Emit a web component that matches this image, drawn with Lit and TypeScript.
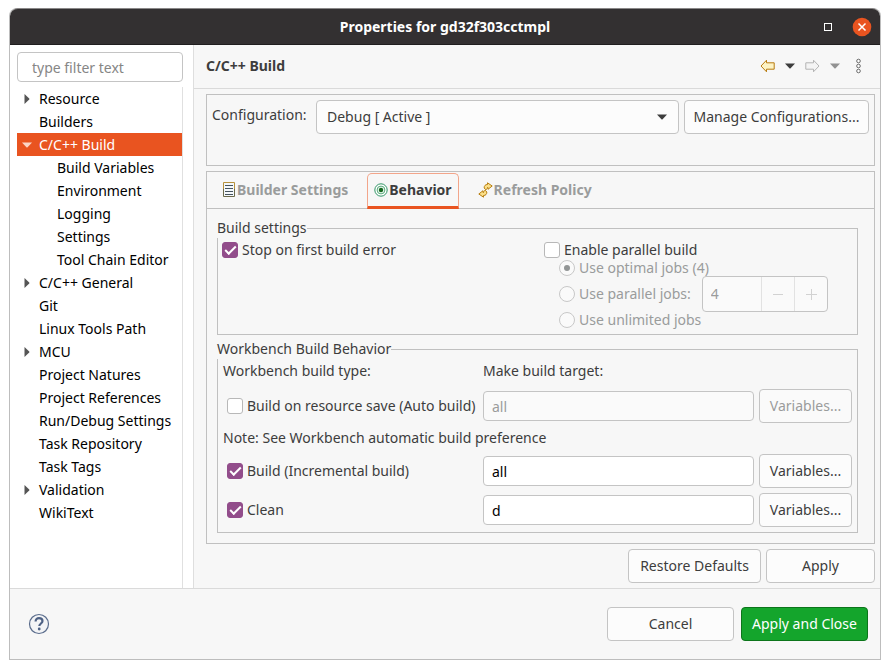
import { LitElement, html, css, svg, nothing } from "lit";
import { customElement, property, state } from "lit/decorators.js";
import { classMap } from "lit/directives/class-map.js";

type TreeNode = { label: string; level: number; arrow?: "closed" | "open" };

const TREE: TreeNode[] = [
  { label: "Resource", level: 1, arrow: "closed" },
  { label: "Builders", level: 1 },
  { label: "C/C++ Build", level: 1, arrow: "open" },
  { label: "Build Variables", level: 2 },
  { label: "Environment", level: 2 },
  { label: "Logging", level: 2 },
  { label: "Settings", level: 2 },
  { label: "Tool Chain Editor", level: 2 },
  { label: "C/C++ General", level: 1, arrow: "closed" },
  { label: "Git", level: 1 },
  { label: "Linux Tools Path", level: 1 },
  { label: "MCU", level: 1, arrow: "closed" },
  { label: "Project Natures", level: 1 },
  { label: "Project References", level: 1 },
  { label: "Run/Debug Settings", level: 1 },
  { label: "Task Repository", level: 1 },
  { label: "Task Tags", level: 1 },
  { label: "Validation", level: 1, arrow: "closed" },
  { label: "WikiText", level: 1 },
];

const base = css`
  *,
  *::before {
    box-sizing: border-box;
  }
  button,
  input,
  select {
    font: inherit;
    color: inherit;
    margin: 0;
  }
  svg {
    display: block;
    flex: none;
  }
  .button {
    height: 34px;
    padding: 0 8px;
    border: 1px solid #c4c4c4;
    border-radius: 4px;
    background: #fcfcfc;
    white-space: nowrap;
  }
  .button:disabled {
    color: #9a9c9c;
    background: #fafafa;
  }
  .entry {
    width: 100%;
    min-width: 0;
    height: 30px;
    padding: 0 8px;
    border: 1px solid #c4c4c4;
    border-radius: 4px;
    background: #ffffff;
    color: #000000;
  }
  .entry:disabled {
    background: #fafafa;
    color: #9a9c9c;
  }
  .option {
    display: flex;
    align-items: center;
    gap: 4px;
    white-space: nowrap;
  }
  .option.off {
    color: #9a9c9c;
  }
  .check,
  .radio {
    appearance: none;
    display: grid;
    place-items: center;
    flex: none;
    width: 16px;
    height: 16px;
    border: 1px solid #b8b8b8;
    background: #ffffff;
  }
  .check {
    border-radius: 3px;
  }
  .check:checked {
    border-color: #924d8b;
    background: #924d8b;
  }
  .check:checked::before {
    content: "";
    width: 11px;
    height: 6px;
    margin-bottom: 3px;
    border: solid #ffffff;
    border-width: 0 0 2px 2px;
    transform: rotate(-45deg);
  }
  .radio {
    border-radius: 50%;
    border-color: #c8c8c8;
    background: #fafafa;
  }
  .radio:checked::before {
    content: "";
    width: 6px;
    height: 6px;
    border-radius: 50%;
    background: #929595;
  }
`;

const caret = (cls = "") => svg`
  <svg class=${cls} width="10" height="6" viewBox="0 0 10 6" aria-hidden="true">
    <path d="M0 .5h10L5.6 5.2Q5 5.8 4.4 5.2z" fill="currentColor" />
  </svg>`;

@customElement("title-bar")
class TitleBar extends LitElement {
  @property() heading = "";

  static styles = [
    base,
    css`
      :host {
        box-sizing: border-box;
        display: grid;
        grid-template-columns: 1fr auto 1fr;
        align-items: center;
        height: 37px;
        padding: 0 8px;
        background: #333031;
        border-top: 1px solid #8a8888;
        border-bottom: 1px solid #201e1f;
        border-radius: 8px 8px 0 0;
        color: #ffffff;
      }
      .heading {
        grid-column: 2;
        margin: 0;
        font-size: 14px;
        font-weight: 700;
      }
      .controls {
        display: flex;
        justify-content: flex-end;
        align-items: center;
        gap: 20px;
      }
      .control {
        padding: 0;
        border: 0;
        background: none;
      }
    `,
  ];

  render() {
    return html`
      <h1 class="heading">${this.heading}</h1>
      <div class="controls">
        <button class="control" aria-label="Maximize">
          <svg width="8" height="8" viewBox="0 0 8 8">
            <rect x=".5" y=".5" width="7" height="7" fill="none" stroke="#fff" />
          </svg>
        </button>
        <button class="control" aria-label="Close">
          <svg width="20" height="20" viewBox="0 0 20 20">
            <circle cx="10" cy="10" r="9.3" fill="#e95420" />
            <path d="M6.5 6.5l7 7M13.5 6.5l-7 7" stroke="#fff" stroke-width="1.5" />
          </svg>
        </button>
      </div>
    `;
  }
}

@customElement("page-tree")
class PageTree extends LitElement {
  @state() private selected = "C/C++ Build";

  static styles = [
    base,
    css`
      :host {
        display: flex;
        flex-direction: column;
        gap: 5px;
        padding: 7px 10px 0 7px;
        background: #ffffff;
        color: #000000;
      }
      .filter {
        padding: 0 14px;
      }
      .filter::placeholder {
        color: #868686;
        opacity: 1;
      }
      .tree {
        flex: 1;
        margin: 0;
        padding: 0;
        list-style: none;
        border-right: 1px solid #e0e0e0;
      }
      .row {
        display: grid;
        grid-template-columns: 12px 1fr;
        align-items: center;
        gap: 6px;
        height: 23px;
        padding-left: 4px;
        white-space: nowrap;
        cursor: default;
      }
      .row.child {
        padding-left: 22px;
      }
      .row.selected {
        background: #e95420;
        color: #ffffff;
      }
      .arrow {
        display: grid;
        place-items: center;
        color: #555555;
      }
      .selected .arrow {
        color: #fbd5c6;
      }
    `,
  ];

  private arrow(kind?: string) {
    if (kind === "open") return caret();
    if (kind === "closed")
      return svg`
        <svg width="6" height="10" viewBox="0 0 6 10" aria-hidden="true">
          <path d="M.5 0v10L5.2 5.6Q5.8 5 5.2 4.4z" fill="currentColor" />
        </svg>`;
    return nothing;
  }

  render() {
    return html`
      <input class="entry filter" type="text" placeholder="type filter text" aria-label="Filter pages" />
      <ul class="tree" role="tree" aria-label="Property pages">
        ${TREE.map(
          (n) => html`
            <li
              role="treeitem"
              aria-level=${n.level}
              aria-selected=${n.label === this.selected}
              aria-expanded=${n.arrow ? String(n.arrow === "open") : nothing}
              class=${classMap({ row: true, child: n.level === 2, selected: n.label === this.selected })}
              @click=${() => (this.selected = n.label)}
            >
              <span class="arrow">${this.arrow(n.arrow)}</span>
              <span>${n.label}</span>
            </li>
          `
        )}
      </ul>
    `;
  }
}

@customElement("behavior-page")
class BehaviorPage extends LitElement {
  static styles = [
    base,
    css`
      :host {
        display: flex;
        flex-direction: column;
        gap: 4px;
        padding: 9px 16px 10px 10px;
      }
      .group {
        min-width: 0;
        margin: 0;
        padding: 0;
        border: 1px solid #c0c0c0;
      }
      .legend {
        margin-left: -1px;
        padding: 0;
        line-height: 20px;
        background: #f7f7f7;
      }
      .settings {
        display: grid;
        grid-template-columns: 1fr 1fr;
        gap: 12px;
        align-items: start;
        padding: 2px 3px 6px 4px;
      }
      .jobs {
        padding-left: 15px;
      }
      .jobs .option {
        height: 16px;
      }
      .parallel {
        display: flex;
        align-items: center;
        gap: 11px;
      }
      .spinner {
        display: flex;
        width: 126px;
        height: 36px;
        border: 1px solid #c4c4c4;
        border-radius: 4px;
        background: #fafafa;
        color: #9a9c9c;
      }
      .count {
        flex: 1;
        min-width: 0;
        padding: 0 8px;
        border: 0;
        background: none;
        appearance: textfield;
      }
      .count::-webkit-inner-spin-button {
        display: none;
      }
      .step {
        display: grid;
        place-items: center;
        width: 33px;
        padding: 0;
        border: 0;
        border-left: 1px solid #e2e2e2;
        background: none;
      }
      .workbench {
        display: grid;
        grid-template-columns: minmax(255px, auto) minmax(0, 1fr) 93px;
        align-items: center;
        gap: 5px;
        padding: 2px 5px 5px;
      }
      .workbench .option {
        padding-left: 4px;
      }
      .caption {
        height: 23px;
      }
      .target {
        grid-column: 2 / -1;
      }
      .note {
        grid-column: 1 / -1;
        height: 21px;
      }
    `,
  ];

  private targetRow(label: string, value: string, on: boolean) {
    return html`
      <label class="option"><input class="check" type="checkbox" .checked=${on} />${label}</label>
      <input class="entry" type="text" .value=${value} ?disabled=${!on} aria-label="Make build target: ${label}" />
      <button class="button" ?disabled=${!on}>Variables...</button>
    `;
  }

  render() {
    return html`
      <fieldset class="group">
        <legend class="legend">Build settings</legend>
        <div class="settings">
          <label class="option"><input class="check" type="checkbox" checked />Stop on first build error</label>
          <div>
            <label class="option"><input class="check" type="checkbox" />Enable parallel build</label>
            <div class="jobs">
              <label class="option off"><input class="radio" type="radio" name="jobs" checked disabled />Use optimal jobs (4)</label>
              <div class="parallel">
                <label class="option off"><input class="radio" type="radio" name="jobs" disabled />Use parallel jobs:</label>
                <div class="spinner">
                  <input class="count" type="number" value="4" disabled aria-label="Parallel jobs" />
                  <button class="step" disabled aria-label="Decrease">
                    <svg width="12" height="12" viewBox="0 0 12 12"><path d="M1 6.5h10" stroke="#d2d2d2" /></svg>
                  </button>
                  <button class="step" disabled aria-label="Increase">
                    <svg width="12" height="12" viewBox="0 0 12 12">
                      <path d="M1 6.5h11M6.5 1v11" stroke="#d2d2d2" />
                    </svg>
                  </button>
                </div>
              </div>
              <label class="option off"><input class="radio" type="radio" name="jobs" disabled />Use unlimited jobs</label>
            </div>
          </div>
        </div>
      </fieldset>

      <fieldset class="group">
        <legend class="legend">Workbench Build Behavior</legend>
        <div class="workbench">
          <span class="caption">Workbench build type:</span>
          <span class="caption target">Make build target:</span>
          ${this.targetRow("Build on resource save (Auto build)", "all", false)}
          <span class="note">Note: See Workbench automatic build preference</span>
          ${this.targetRow("Build (Incremental build)", "all", true)} ${this.targetRow("Clean", "d", true)}
        </div>
      </fieldset>
    `;
  }
}

const listIcon = svg`
  <svg width="14" height="16" viewBox="0 0 14 16" aria-hidden="true">
    <rect x="1.5" y=".5" width="11" height="14" fill="#f4f8fb" />
    <path d="M1.500 8V.5h11V8" fill="none" stroke="#b8923c" />
    <path d="M1.500 7v7.500h11V7" fill="none" stroke="#6b6a4c" />
    <path d="M3 3.500h8M3 6.500h8M3 9.500h8M3 12.500h8" stroke="#46545f" />
  </svg>`;

const targetIcon = svg`
  <svg width="14" height="14" viewBox="0 0 14 14" aria-hidden="true">
    <circle cx="7" cy="7" r="6.200" fill="#fff" stroke="#2f9465" />
    <circle cx="7" cy="7" r="3.900" fill="#eaf6ee" stroke="#58ab7c" />
    <circle cx="7" cy="7" r="2.200" fill="#16671f" />
  </svg>`;

const refreshIcon = svg`
  <svg width="15" height="16" viewBox="0 0 15 16" aria-hidden="true">
    <g fill="#fbe08a" stroke="#b87f12" stroke-linejoin="round">
      <path d="M9.500 .8v1.700C7.400 2.400 6 3.900 6.200 6l1.600 1.800 1.700-1.500V5.500h.5v1.800L14.200 4z" />
      <path d="M5.500 15.200v-1.700c2.100.1 3.500-1.400 3.300-3.500L7.200 8.200 5.500 9.700v.8H5V8.700L.8 12z" />
    </g>
  </svg>`;

@customElement("app-root")
class AppRoot extends LitElement {
  @state() private tab = "Behavior";

  static styles = [
    base,
    css`
      :host {
        box-sizing: border-box;
        display: flex;
        min-height: 100vh;
        padding: 8px 9px 9px;
        background: #ffffff;
        color: #3d3d3d;
        font: 14px/20px "Noto Sans", sans-serif;
      }
      .window {
        flex: 1;
        min-width: 0;
        display: flex;
        flex-direction: column;
        border: solid #bdbdbd;
        border-width: 0 1px 1px;
        border-radius: 8px 8px 0 0;
        background: #f7f7f7;
      }
      .body {
        flex: 1;
        display: grid;
        grid-template-columns: 183px minmax(0, 1fr);
        border-bottom: 1px solid #dadada;
      }
      .page {
        display: flex;
        flex-direction: column;
        border-left: 1px solid #dedede;
      }
      .head {
        display: flex;
        align-items: center;
        justify-content: space-between;
        height: 44px;
        padding: 0 15px 2px 12px;
        border-bottom: 1px solid #dadada;
      }
      .name {
        margin: 0;
        font-size: 14px;
        font-weight: 700;
      }
      .tools {
        display: flex;
        align-items: center;
        gap: 10px;
      }
      .tool {
        padding: 0;
        border: 0;
        background: none;
      }
      .tool:disabled {
        color: #929292;
      }
      .content {
        flex: 1;
        display: flex;
        flex-direction: column;
        gap: 5px;
        padding: 5px 5px 5px 12px;
      }
      .config {
        display: flex;
        align-items: flex-start;
        gap: 5px;
        padding: 5px 5px 31px;
        border: 1px solid #c0c0c0;
      }
      .configlabel {
        width: 99px;
        line-height: 30px;
        white-space: nowrap;
      }
      .combo {
        position: relative;
        flex: 1;
        min-width: 0;
      }
      .select {
        appearance: none;
        width: 100%;
        height: 34px;
        padding: 0 28px 0 10px;
        border: 1px solid #c4c4c4;
        border-radius: 4px;
        background: #fcfcfc;
      }
      .drop {
        position: absolute;
        top: 14px;
        right: 12px;
        pointer-events: none;
      }
      .manage {
        width: 185px;
      }
      .folder {
        border: 1px solid #c0c0c0;
      }
      .tabs {
        display: flex;
        align-items: stretch;
        gap: 12px;
        height: 37px;
        padding: 1px 8px 0;
        border-bottom: 1px solid #c0c0c0;
      }
      .tab {
        display: flex;
        align-items: center;
        gap: 1px;
        height: 36px;
        padding: 0 6px;
        border: 1px solid transparent;
        border-bottom: 3px solid transparent;
        background: none;
        color: #9a9c9c;
        font-weight: 700;
        white-space: nowrap;
      }
      .tab.active {
        border-color: #f2a58a;
        border-bottom-color: #e95420;
        border-radius: 5px 5px 0 0;
        color: #3d3d3d;
      }
      .actions {
        display: flex;
        justify-content: flex-end;
        gap: 5px;
      }
      .restore {
        min-width: 133px;
      }
      .apply {
        min-width: 109px;
      }
      .foot {
        display: flex;
        align-items: center;
        gap: 7px;
        padding: 18px 12px 18px 18px;
      }
      .help {
        margin-right: auto;
        padding: 0;
        border: 0;
        background: none;
      }
      .final {
        min-width: 127px;
      }
      .primary {
        border-color: #0c751b;
        background: #14a52c;
        color: #ffffff;
      }
    `,
  ];

  private renderTab(label: string, icon: unknown) {
    const active = this.tab === label;
    return html`
      <button
        role="tab"
        aria-selected=${active}
        class=${classMap({ tab: true, active })}
        @click=${() => (this.tab = label)}
      >
        ${icon}${label}
      </button>
    `;
  }

  render() {
    return html`
      <div class="window">
        <title-bar heading="Properties for gd32f303cctmpl"></title-bar>
        <div class="body">
          <page-tree></page-tree>
          <main class="page">
            <header class="head">
              <h2 class="name">C/C++ Build</h2>
              <div class="tools">
                <button class="tool" aria-label="Back">
                  <svg width="15" height="14" viewBox="0 0 15 14">
                    <path d="M1 7L6.500 1.200v2.600h7.700v6.400H6.500v2.600z" fill="#fdf3c4" stroke="#b87b10" stroke-linejoin="round" />
                  </svg>
                </button>
                <button class="tool" aria-label="Back history">${caret()}</button>
                <button class="tool" aria-label="Forward" disabled>
                  <svg width="15" height="14" viewBox="0 0 15 14">
                    <path d="M14 7L8.500 1.200v2.600H.8v6.400h7.700v2.600z" fill="#f4f4f4" stroke="#b4b4b4" stroke-linejoin="round" />
                  </svg>
                </button>
                <button class="tool" aria-label="Forward history" disabled>${caret()}</button>
                <button class="tool" aria-label="View menu">
                  <svg width="15" height="16" viewBox="0 0 15 16">
                    <g fill="#fff" stroke="#6a6a6a">
                      <circle cx="8.500" cy="3" r="1.800" />
                      <circle cx="8.500" cy="8" r="1.800" />
                      <circle cx="8.500" cy="13" r="1.800" />
                    </g>
                  </svg>
                </button>
              </div>
            </header>
            <div class="content">
              <section class="config">
                <label class="configlabel" for="configuration">Configuration:</label>
                <div class="combo">
                  <select class="select" id="configuration">
                    <option>Debug [ Active ]</option>
                  </select>
                  ${caret("drop")}
                </div>
                <button class="button manage">Manage Configurations...</button>
              </section>
              <section class="folder">
                <div class="tabs" role="tablist">
                  ${this.renderTab("Builder Settings", listIcon)} ${this.renderTab("Behavior", targetIcon)}
                  ${this.renderTab("Refresh Policy", refreshIcon)}
                </div>
                <behavior-page></behavior-page>
              </section>
              <div class="actions">
                <button class="button restore">Restore Defaults</button>
                <button class="button apply">Apply</button>
              </div>
            </div>
          </main>
        </div>
        <footer class="foot">
          <button class="help" aria-label="Help">
            <svg width="22" height="22" viewBox="0 0 22 22">
              <circle cx="11" cy="11" r="9.500" fill="#f3f4f6" stroke="#5a6c8c" stroke-width="1.200" />
              <path d="M7.600 8.400C7.600 6.400 9 5.200 11 5.200s3.500 1.100 3.500 2.900c0 2.300-3.200 2.500-3.200 5" fill="none" stroke="#4f6285" stroke-width="2.200" />
              <circle cx="11.200" cy="16" r="1.400" fill="#4f6285" />
            </svg>
          </button>
          <button class="button final">Cancel</button>
          <button class="button final primary">Apply and Close</button>
        </footer>
      </div>
    `;
  }
}
